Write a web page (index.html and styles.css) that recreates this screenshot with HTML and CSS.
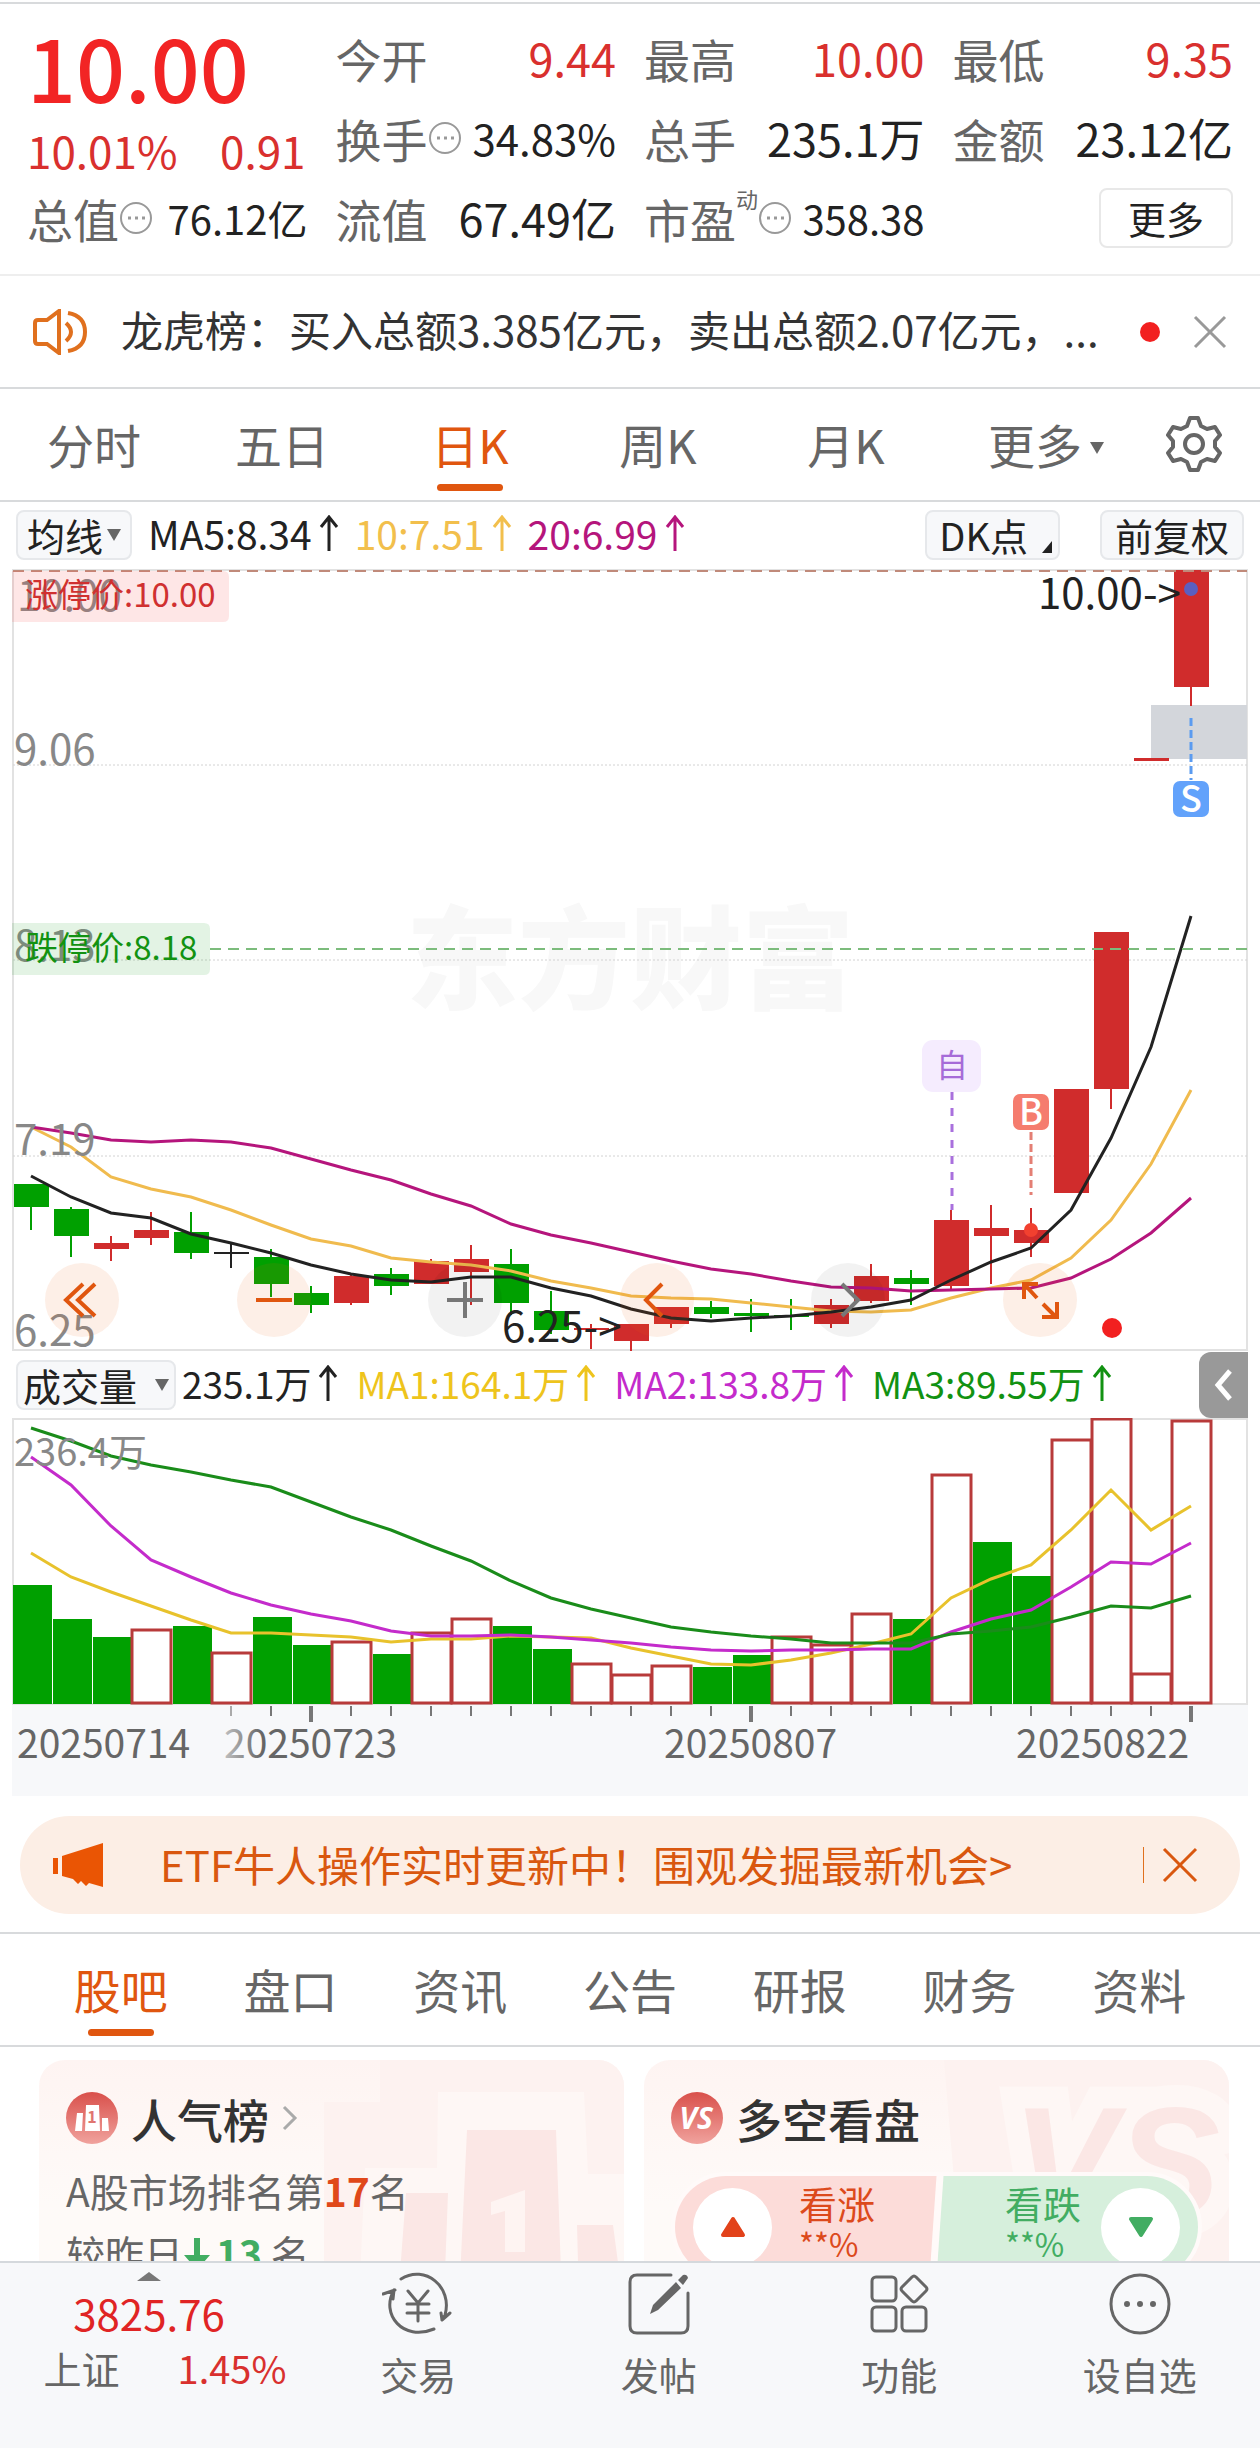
FILE: index.html
```
<!DOCTYPE html>
<html lang="zh-CN">

<head>
    <meta charset="UTF-8">
    <meta name="viewport" content="width=device-width, initial-scale=1">
    <title>日K</title>
    <link rel="stylesheet" href="styles.css">
</head>

<body>
    <main class="content">
        <section class="quote">
            <div class="price">
                <div class="price-now">10.00</div>
                <div class="price-change"><span>10.01%</span><span>0.91</span></div>
            </div>
            <div class="cell"><span class="label">今开</span><span class="value red">9.44</span></div>
            <div class="cell"><span class="label">最高</span><span class="value red">10.00</span></div>
            <div class="cell"><span class="label">最低</span><span class="value red">9.35</span></div>
            <div class="cell"><span class="label">换手</span><svg class="tip" viewBox="0 0 34 34"><circle cx="17" cy="17" r="15"/><path d="M9 17h3M16 17h3M23 17h3"/></svg><span class="value medium">34.83%</span></div>
            <div class="cell"><span class="label">总手</span><span class="value">235.1万</span></div>
            <div class="cell"><span class="label">金额</span><span class="value">23.12亿</span></div>
            <div class="cell"><span class="label">总值</span><svg class="tip" viewBox="0 0 34 34"><circle cx="17" cy="17" r="15"/><path d="M9 17h3M16 17h3M23 17h3"/></svg><span class="value small">76.12亿</span></div>
            <div class="cell"><span class="label">流值</span><span class="value">67.49亿</span></div>
            <div class="cell"><span class="label">市盈<sup>动</sup></span><svg class="tip after-sup" viewBox="0 0 34 34"><circle cx="17" cy="17" r="15"/><path d="M9 17h3M16 17h3M23 17h3"/></svg><span class="value small">358.38</span></div>
            <div class="cell"><button class="more-btn">更多</button></div>
        </section>

        <section class="news">
            <svg class="speaker" viewBox="0 0 56 46" width="56" height="46"><path d="M3 14q0-3 3-3h9L27 2v42L15 35H6q-3 0-3-3z"/><path d="M34 14q10 9 0 18M36 4q17 3 17 19T36 42"/></svg>
            <a class="news-text" href="#">龙虎榜：买入总额3.385亿元，卖出总额2.07亿元，...</a>
            <span class="dot"></span>
            <button class="close" aria-label="关闭"><svg viewBox="0 0 36 36" width="36" height="36"><path d="M3 3l30 30M33 3L3 33"/></svg></button>
        </section>

        <nav class="tabs period">
            <button>分时</button>
            <button>五日</button>
            <button class="active">日K</button>
            <button>周K</button>
            <button>月K</button>
            <button class="more-tab">更多<i class="caret"></i></button>
            <button class="gear" aria-label="设置"><svg viewBox="0 0 56 58" width="56" height="58"><path d="M24 3h8l3 8 6 3 8-2 5 8-5 6v6l5 6-5 8-8-2-6 3-3 8h-8l-3-8-6-3-8 2-5-8 5-6v-6l-5-6 5-8 8 2 6-3z"/><circle cx="28" cy="29" r="9"/></svg></button>
        </nav>

        <section class="chart">
            <svg width="0" height="0"><symbol id="rise" viewBox="0 0 20 36"><path d="M10 36V3M2 12l8-10 8 10"/></symbol></svg>
            <div class="legend">
                <button class="chip">均线<i class="caret"></i></button>
                <span class="ma">MA5:8.34<svg class="rise"><use href="#rise"/></svg></span>
                <span class="ma ma10">10:7.51<svg class="rise"><use href="#rise"/></svg></span>
                <span class="ma ma20">20:6.99<svg class="rise"><use href="#rise"/></svg></span>
                <button class="chip dk">DK点<i class="corner"></i></button>
                <button class="chip">前复权</button>
            </div>

            <div class="price-chart">
                <svg viewBox="12 568 1236 784">
                    <text class="watermark" x="406" y="1001">东方财富</text>
                    <path class="frame" d="M13 570H1247V1350H13z"/>
                    <path class="grid" d="M13 765H1247M13 960H1247M13 1156H1247"/>
                    <rect class="gap" x="1151" y="705" width="96" height="54"/>
                    <g id="candles"></g>
                    <g id="priceLines"></g>
                    <path class="limit-up" d="M13 571H1247"/>
                    <path class="limit-down" d="M210 949H1247"/>
                    <g class="axis-text">
                        <text x="17" y="611">10.00</text>
                        <text x="14" y="765">9.06</text>
                        <text x="14" y="961">8.13</text>
                        <text x="14" y="1155">7.19</text>
                        <text x="14" y="1346">6.25</text>
                    </g>
                    <path class="tag-up" d="M12 571h211q6 0 6 6v39q0 6-6 6H12z"/>
                    <text class="tag-up-text" x="25" y="607">涨停价:10.00</text>
                    <path class="tag-down" d="M12 923h192q6 0 6 6v40q0 6-6 6H12z"/>
                    <text class="tag-down-text" x="25" y="960">跌停价:8.18</text>
                    <circle cx="1191" cy="589" r="7" fill="#5b5fc0"/>
                    <text class="mark" x="1038" y="609">10.00-&gt;</text>
                    <text class="mark" x="502" y="1342">6.25-&gt;</text>

                    <path class="s-line" d="M1191 718V780"/>
                    <rect x="1173" y="781" width="36" height="36" rx="7" fill="#62a2fb"/>
                    <text class="badge" x="1191" y="812">S</text>
                    <path class="z-line" d="M952 1092V1210"/>
                    <rect x="922" y="1040" width="59" height="52" rx="11" fill="#f5ecfe"/>
                    <text class="z-text" x="952" y="1077">自</text>
                    <path class="b-line" d="M1031 1132V1195"/>
                    <rect x="1013" y="1094" width="36" height="36" rx="7" fill="#f57c6e"/>
                    <text class="badge" x="1031" y="1125">B</text>
                    <circle cx="1031" cy="1230" r="7" fill="#f2402f"/>
                    <circle cx="1112" cy="1328" r="10" fill="#f22020"/>
                </svg>
                <div class="tools">
                    <button aria-label="最左"><svg viewBox="0 0 74 74"><path d="M38 21L21 37l17 16M50 21L33 37l17 16"/></svg></button>
                    <button aria-label="缩小"><svg viewBox="0 0 74 74"><path d="M19 37h36"/></svg></button>
                    <button class="off" aria-label="放大"><svg viewBox="0 0 74 74"><path d="M19 37h36M37 19v36"/></svg></button>
                    <button aria-label="左移"><svg viewBox="0 0 74 74"><path d="M42 21L26 37l16 16"/></svg></button>
                    <button class="off" aria-label="右移"><svg viewBox="0 0 74 74"><path d="M31 21l16 16-16 16"/></svg></button>
                    <button aria-label="全屏"><svg viewBox="0 0 74 74"><path d="M21 36V21h14M22 22l12 13M40 41l13 13M54 39v15H39"/></svg></button>
                </div>
            </div>

            <div class="legend volume">
                <button class="chip">成交量<i class="caret"></i></button>
                <span class="ma">235.1万<svg class="rise"><use href="#rise"/></svg></span>
                <span class="ma v1">MA1:164.1万<svg class="rise"><use href="#rise"/></svg></span>
                <span class="ma v2">MA2:133.8万<svg class="rise"><use href="#rise"/></svg></span>
                <span class="ma v3">MA3:89.55万<svg class="rise"><use href="#rise"/></svg></span>
                <button class="side" aria-label="展开"><svg viewBox="0 0 20 34" width="20" height="34"><path d="M16 3L4 17l12 14"/></svg></button>
            </div>

            <svg viewBox="12 1418 1236 287">
                <path class="frame" d="M13 1419H1247V1704H13z"/>
                <g id="bars"></g>
                <g id="volumeLines"></g>
                <text class="axis-text vol-max" x="14" y="1466">236.4万</text>
            </svg>
            <svg class="dates" viewBox="12 1705 1236 91">
                <defs>
                    <linearGradient id="fade" x1="226" x2="262" y1="0" y2="0" gradientUnits="userSpaceOnUse">
                        <stop offset="0" stop-color="#bbb"/><stop offset="1" stop-color="#666"/>
                    </linearGradient>
                </defs>
                <g id="ticks"></g>
                <text x="17" y="1758">20250714</text>
                <text class="faded" x="224" y="1758">20250723</text>
                <text x="664" y="1758">20250807</text>
                <text x="1016" y="1758">20250822</text>
            </svg>
        </section>

        <section class="banner">
            <svg viewBox="0 0 50 44" width="50" height="44"><path d="M0 15h5v16H0zM9 13L50 0v44l-14-4-3 3-5-5-3 3-5-5-11-3z"/></svg>
            <a href="#">ETF牛人操作实时更新中！围观发掘最新机会&gt;</a>
            <button class="close" aria-label="关闭"><svg viewBox="0 0 36 36" width="36" height="36"><path d="M2 2l32 32M34 2L2 34"/></svg></button>
        </section>

        <nav class="tabs sections">
            <button class="active">股吧</button>
            <button>盘口</button>
            <button>资讯</button>
            <button>公告</button>
            <button>研报</button>
            <button>财务</button>
            <button>资料</button>
        </nav>

        <section class="cards">
            <article class="card">
                <svg class="art" viewBox="0 0 585 240" width="585" height="240">
                    <path fill="#fdf2f0" d="M341 0h244v240H285V42h56z"/>
                    <path fill="#fef7f5" d="M399 32h146l4 82h36v126H320l6-132h72z"/>
                    <path fill="#fbe7e5" d="M428 70h89l6 170H420zM367 133h42l-4 107h-46zM538 165h36l10 75h-44z"/>
                    <path fill="#fef4f2" d="M452 142l34-12v62h-20v-41l-14 4z"/>
                </svg>
                <h3>
                    <svg viewBox="0 0 52 52" width="52" height="52"><circle cx="26" cy="26" r="26" fill="url(#red)"/><path fill="#fff" d="M20 13h13l1 26H19zM11 21h6l-1 18H9zM36 26h6l1 13h-7z"/><text class="podium" x="26" y="31">1</text></svg>
                    人气榜
                    <svg class="arrow" viewBox="0 0 16 26" width="16" height="26"><path d="M2 2l11 11L2 24"/></svg>
                </h3>
                <p>A股市场排名第<b class="rank">17</b>名</p>
                <p>较昨日<svg class="down" viewBox="0 0 26 32" width="26" height="32"><path d="M10 0h6v17h10L13 32 0 17h10z"/></svg><b class="green">13</b> 名</p>
            </article>
            <article class="card vs">
                <svg class="art" viewBox="0 0 585 240" width="585" height="240">
                    <path fill="#fdf2f0" d="M300 0h285v240H320z"/>
                    <text class="vs-halo" x="368" y="156">VS</text>
                    <text class="vs-big" x="368" y="156">VS</text>
                </svg>
                <h3>
                    <svg viewBox="0 0 52 52" width="52" height="52">
                        <defs><linearGradient id="red" x2="0" y2="1"><stop offset="0" stop-color="#d9504b"/><stop offset="1" stop-color="#f0a29d"/></linearGradient></defs>
                        <circle cx="26" cy="26" r="26" fill="url(#red)"/><text class="vs-icon" x="25" y="37">VS</text>
                    </svg>
                    多空看盘
                </h3>
                <div class="vote">
                    <button class="up">
                        <span class="knob"><svg viewBox="0 0 26 22" width="26" height="22"><path d="M13 3L23 19H3z"/></svg></span>
                        <span class="vote-text">看涨<small>**%</small></span>
                    </button>
                    <button class="fall">
                        <span class="vote-text">看跌<small>**%</small></span>
                        <span class="knob"><svg viewBox="0 0 26 22" width="26" height="22"><path d="M13 19L23 3H3z"/></svg></span>
                    </button>
                </div>
            </article>
        </section>
    </main>

    <nav class="bottom">
        <a class="index" href="#">
            <i class="fold"></i>
            <span class="points">3825.76</span>
            <span class="index-row"><span>上证</span><span class="red">1.45%</span></span>
        </a>
        <a href="#">
            <svg viewBox="0 0 72 64" width="72" height="64"><path d="M19 7C43-8 71 15 63 43l-3 5M60 48l8-7M60 48l-1-7M12 18C-2 42 21 70 52 57M1 22l12-4M12 18l-1 9M26 19l10 12 10-12M36 31v18M25 32h22M25 41h22"/></svg>
            交易
        </a>
        <a href="#">
            <svg viewBox="0 0 72 64" width="72" height="64"><path d="M48 3H14q-7 0-7 7v44q0 7 7 7h44q7 0 7-7V21"/><path class="fill" d="M27 42l3-9 23-23 5 6-23 22zM55 8l5-5q4-1 5 3l-5 7z"/></svg>
            发帖
        </a>
        <a href="#">
            <svg viewBox="0 0 72 64" width="72" height="64"><rect x="9" y="5" width="24" height="24" rx="4"/><rect x="9" y="35" width="24" height="24" rx="4"/><rect x="39" y="35" width="24" height="24" rx="4"/><path d="M49 5q2-2 4 0l10 10q2 2 0 4L53 29q-2 2-4 0L39 19q-2-2 0-4z"/></svg>
            功能
        </a>
        <a href="#">
            <svg viewBox="0 0 72 64" width="72" height="64"><circle cx="36" cy="32" r="29"/><path class="fill" d="M20 32a3 3 0 1 1 6 0 3 3 0 1 1-6 0M33 32a3 3 0 1 1 6 0 3 3 0 1 1-6 0M46 32a3 3 0 1 1 6 0 3 3 0 1 1-6 0"/></svg>
            设自选
        </a>
    </nav>

    <script src="chart.js"></script>
</body>

</html>
```
FILE: styles.css
```
* {
    box-sizing: border-box;
}

body {
    margin: 0;
    height: 100vh;
    display: flex;
    flex-direction: column;
    background: #fff;
    color: #222;
    font-family: "Noto Sans CJK SC", sans-serif;
}

button {
    padding: 0;
    border: none;
    background: none;
    color: inherit;
    font: inherit;
    cursor: pointer;
}

a {
    color: inherit;
    text-decoration: none;
}

svg {
    display: block;
    fill: none;
}

.content {
    flex: 1;
    min-height: 0;
    overflow: hidden;
}

.red {
    color: #d9302e;
}

.green {
    color: #42ad62;
}

.caret {
    display: inline-block;
    border: 7px solid transparent;
    border-top: 12px solid #666;
    border-bottom: none;
}

/* quote */
.quote {
    display: grid;
    grid-template-columns: repeat(4, 1fr);
    grid-auto-rows: 80px;
    column-gap: 28px;
    margin-top: 2px;
    padding: 15px 27px;
    border-top: 2px solid #d8dadc;
    border-bottom: 2px solid #eee;
}

.price {
    grid-row: span 2;
    color: #f22424;
}

.price-now {
    font-size: 86px;
    font-weight: 500;
    line-height: 94px;
}

.price-change {
    display: flex;
    justify-content: space-between;
    padding-right: 2px;
    color: #d9302e;
    font-size: 44px;
    line-height: 74px;
}

.cell {
    display: flex;
    align-items: center;
    line-height: 76px;
    padding-bottom: 2px;
}

.label {
    position: relative;
    color: #666;
    font-size: 46px;
}

.label sup {
    position: absolute;
    left: 100%;
    top: 0;
    font-size: 22px;
    line-height: 36px;
}

.value {
    margin-left: auto;
    font-size: 45px;
}

.value.medium {
    font-size: 42px;
}

.value.small {
    font-size: 40px;
}

.tip {
    width: 34px;
    stroke: #999;
    stroke-width: 2;
}

.tip path {
    stroke-width: 3;
}

.tip.after-sup {
    margin-left: 22px;
}

.more-btn {
    width: 134px;
    height: 60px;
    margin-left: auto;
    border: 2px solid #e8e8e8;
    border-radius: 8px;
    font-size: 38px;
    line-height: 50px;
}

/* news */
.news {
    display: flex;
    align-items: center;
    padding: 0 32px;
    border-bottom: 2px solid #d8dadc;
    color: #333;
    font-size: 42px;
    line-height: 111px;
}

.speaker {
    margin-right: 33px;
    stroke: #e0701e;
    stroke-width: 4;
}

.news-text {
    flex: 1;
    padding-bottom: 6px;
    line-height: 105px;
    white-space: nowrap;
}

.dot {
    width: 20px;
    height: 20px;
    margin-right: 32px;
    border-radius: 50%;
    background: #f22020;
}

.close svg {
    stroke: #999;
    stroke-width: 3;
}

/* tabs */
.tabs {
    display: flex;
    border-bottom: 2px solid #d8dadc;
}

.tabs button {
    position: relative;
    flex: 1;
    padding-bottom: 2px;
    color: #666;
    font-size: 47px;
    line-height: 109px;
}

.tabs .active {
    color: #e0560f;
}

.tabs .active::after {
    content: "";
    position: absolute;
    left: 50%;
    bottom: 9px;
    width: 66px;
    height: 7px;
    margin-left: -33px;
    border-radius: 4px;
    background: #e0560f;
}

.tabs .more-tab {
    text-indent: 24px;
}

.tabs .caret {
    margin: 0 0 10px 8px;
}

.period .gear {
    flex: 0 0 132px;
    display: flex;
    align-items: center;
    justify-content: center;
}

.gear svg {
    stroke: #666;
    stroke-width: 4;
    stroke-linejoin: round;
}

.sections {
    padding: 0 36px;
    border-top: 2px solid #d8dadc;
}

/* chart */
.chart {
    padding: 0 12px;
}

.legend {
    display: flex;
    align-items: center;
    gap: 16px;
    height: 66px;
    padding: 0 4px;
    font-size: 38px;
    white-space: nowrap;
}

.chip {
    display: flex;
    align-items: center;
    gap: 4px;
    height: 50px;
    padding: 0 9px;
    border: 2px solid #e6e8eb;
    border-radius: 8px;
    background: #f7f8fa;
    line-height: 42px;
}

.chip:last-child {
    padding: 0 13px;
}

.chip.dk {
    margin-left: auto;
    margin-right: 24px;
    padding: 0 6px 0 12px;
    gap: 14px;
}

.corner {
    align-self: flex-end;
    margin-bottom: 5px;
    border-left: 10px solid transparent;
    border-bottom: 12px solid #222;
}

.ma {
    display: flex;
    align-items: center;
    gap: 7px;
    padding-bottom: 4px;
    font-size: 39px;
    line-height: 46px;
}

.rise {
    width: 20px;
    height: 36px;
    stroke: currentColor;
    stroke-width: 3;
}

.ma10 {
    color: #f2bf4c;
}

.ma20 {
    color: #b5157c;
}

.legend.volume {
    gap: 18px;
    padding-right: 0;
}

.volume .chip {
    gap: 18px;
    margin-right: -12px;
    padding: 0 5px;
}

.volume .ma {
    font-size: 37px;
}

.v1 {
    color: #eec41c;
}

.v2 {
    color: #c42bcb;
}

.v3 {
    color: #129212;
}

.side {
    display: flex;
    align-items: center;
    justify-content: center;
    width: 49px;
    height: 66px;
    margin-left: auto;
    border-radius: 12px 0 0 12px;
    background: #999;
}

.side svg {
    stroke: #fff;
    stroke-width: 5;
}

.price-chart {
    position: relative;
}

.tools {
    position: absolute;
    left: 33px;
    right: 171px;
    bottom: 15px;
    display: flex;
    justify-content: space-between;
}

.tools button {
    width: 74px;
    height: 74px;
    border-radius: 50%;
    background: rgba(240, 100, 20, 0.1);
}

.tools svg {
    stroke: #e0560f;
    stroke-width: 4;
}

.tools .off {
    background: rgba(0, 0, 0, 0.05);
}

.tools .off svg {
    stroke: #777;
}

.frame {
    stroke: #e2e2e2;
    stroke-width: 2;
}

.grid {
    stroke: #d2d2d2;
    stroke-dasharray: 2 2;
}

.gap {
    fill: #d3d6db;
}

.limit-up {
    stroke: #c08a7a;
    stroke-width: 2;
    stroke-dasharray: 11 7;
}

.limit-down {
    stroke: #7cbc7c;
    stroke-width: 2;
    stroke-dasharray: 11 7;
}

.watermark {
    fill: #f8f8f8;
    font-size: 112px;
    font-weight: 900;
}

.axis-text {
    fill: #888;
    font-size: 42px;
}

.vol-max {
    font-size: 38px;
}

.tag-up {
    fill: rgba(248, 90, 85, 0.15);
}

.tag-down {
    fill: rgba(40, 165, 50, 0.13);
}

.tag-up-text,
.tag-down-text {
    fill: #d03030;
    font-size: 33px;
}

.tag-down-text {
    fill: #129212;
}

.mark {
    fill: #222;
    font-size: 42px;
}

.badge {
    fill: #fff;
    font-size: 36px;
    font-weight: 500;
    text-anchor: middle;
}

.z-text {
    fill: #a66bd8;
    font-size: 32px;
    text-anchor: middle;
}

.s-line,
.b-line,
.z-line {
    stroke: #5b9bf0;
    stroke-width: 3;
    stroke-dasharray: 8 4;
}

.b-line {
    stroke: #e47f74;
}

.z-line {
    stroke: #a970dd;
    stroke-dasharray: 8 8;
}

.dates {
    background: #f7f8fa;
}

.dates text {
    fill: #666;
    font-size: 39px;
}

.dates .faded {
    fill: url(#fade);
}

/* banner */
.banner {
    display: flex;
    align-items: center;
    height: 98px;
    margin: 20px 20px 18px;
    padding: 0 42px 0 33px;
    border-radius: 49px;
    background: #fceee5;
    color: #d9570f;
    font-size: 42px;
}

.banner svg {
    fill: #ea5504;
}

.banner a {
    flex: 1;
    margin-left: 57px;
    padding-bottom: 4px;
    white-space: nowrap;
}

.banner .close {
    padding-left: 18px;
    border-left: 1px solid #e0701e;
}

.banner .close svg {
    stroke: #d9570f;
}

/* cards */
.cards {
    display: grid;
    grid-template-columns: 1fr 1fr;
    gap: 20px;
    padding: 13px 31px 0 39px;
}

.card {
    position: relative;
    height: 240px;
    padding: 28px 27px;
    border-radius: 26px;
    overflow: hidden;
    background: linear-gradient(#fef4f2, #fefaf8 60%);
    color: #666;
    font-size: 39px;
}

.art {
    position: absolute;
    top: 0;
    right: 0;
}

.card h3,
.card p {
    position: relative;
    margin: 0;
}

.card h3 {
    display: flex;
    align-items: center;
    gap: 13px;
    color: #333;
    font-size: 46px;
    font-weight: 500;
    line-height: 60px;
}

.card p {
    display: flex;
    line-height: 62px;
    white-space: pre;
}

.card h3 + p {
    margin-top: 11px;
}

.card p b {
    font-weight: 700;
}

.arrow {
    stroke: #aaa;
    stroke-width: 3;
}

.down {
    align-self: center;
    margin: 4px 6px 0 1px;
    fill: #42ad62;
}

.rank {
    color: #e0481a;
}

.podium {
    fill: #e07570;
    font-size: 16px;
    font-weight: 700;
    text-anchor: middle;
}

.vs-icon,
.vs-big,
.vs-halo {
    fill: #fff;
    font-family: "Liberation Sans", sans-serif;
    font-size: 30px;
    font-style: italic;
    font-weight: 700;
    text-anchor: middle;
}

.vs-icon {
    font-family: "Open Sans", sans-serif;
}

.vs-big,
.vs-halo {
    fill: #fbe7e5;
    font-size: 156px;
    text-anchor: start;
}

.vs-halo {
    stroke: #fef7f5;
    stroke-width: 44;
}

.vote {
    position: relative;
    display: flex;
    gap: 7px;
    margin: 24px 0 0;
    border: 4px solid #fffaf9;
    border-radius: 56px;
    overflow: hidden;
    background: #fffaf9;
}

.vote button {
    flex: 1;
    display: flex;
    align-items: center;
    height: 102px;
    padding: 0 18px;
    text-align: left;
}

.vote .up {
    background: #fcdcd9;
    color: #dc4a1c;
    clip-path: polygon(0 0, 100% 0, calc(100% - 7px) 100%, 0 100%);
}

.vote .fall {
    justify-content: flex-end;
    margin-left: -7px;
    background: #d6efdc;
    color: #42ad62;
    clip-path: polygon(7px 0, 100% 0, 100% 100%, 0 100%);
}

.knob {
    display: flex;
    align-items: center;
    justify-content: center;
    width: 79px;
    height: 79px;
    border-radius: 50%;
    background: #fff;
}

.knob svg {
    fill: #e2421a;
    stroke: #e2421a;
    stroke-width: 4;
    stroke-linejoin: round;
}

.fall .knob svg {
    fill: #42ad62;
    stroke: #42ad62;
}

.vote-text {
    display: flex;
    flex-direction: column;
    margin: 0 20px 0 27px;
    padding-bottom: 10px;
    font-size: 38px;
    line-height: 42px;
}

.vote-text small {
    font-size: 32px;
    line-height: 38px;
}

/* bottom bar */
.bottom {
    display: grid;
    grid-template-columns: 298px repeat(4, 1fr);
    height: 187px;
    border-top: 2px solid #d5d9dd;
    background: #f7f8fa;
    color: #666;
    font-size: 38px;
    line-height: 52px;
}

.bottom a {
    display: flex;
    flex-direction: column;
    align-items: center;
    gap: 12px;
    padding-top: 9px;
}

.bottom svg {
    stroke: #666;
    stroke-width: 3;
    stroke-linecap: round;
}

.bottom .fill {
    fill: #666;
    stroke: none;
}

.bottom .index {
    gap: 0;
}

.fold {
    border: 12px solid transparent;
    border-top: none;
    border-bottom: 9px solid #777;
}

.points {
    color: #e02424;
    font-size: 42px;
    line-height: 64px;
}

.index-row {
    display: flex;
    gap: 58px;
    padding-left: 32px;
    line-height: 46px;
}
```
FILE: chart.js
```
const STEP = 40
const FIRST = 31

// type, high, body top, body bottom, low
const candles = [
    ['g', 1184, 1184, 1207, 1230], ['g', 1207, 1209, 1236, 1257], ['r', 1236, 1243, 1249, 1261],
    ['r', 1212, 1230, 1238, 1245], ['g', 1212, 1232, 1253, 1259], ['k', 1243, 1252, 1254, 1268],
    ['g', 1249, 1257, 1284, 1297], ['g', 1286, 1293, 1305, 1313], ['r', 1275, 1276, 1303, 1305],
    ['g', 1268, 1274, 1286, 1295], ['r', 1259, 1261, 1284, 1284], ['r', 1245, 1259, 1272, 1305],
    ['g', 1249, 1264, 1303, 1315], ['g', 1291, 1311, 1330, 1334], ['r', 1324, 1328, 1330, 1349],
    ['r', 1324, 1324, 1341, 1351], ['r', 1307, 1307, 1324, 1328], ['g', 1301, 1307, 1314, 1318],
    ['g', 1299, 1313, 1316, 1332], ['g', 1299, 1315, 1317, 1330], ['r', 1299, 1305, 1324, 1328],
    ['r', 1264, 1276, 1301, 1303], ['g', 1270, 1278, 1284, 1305], ['r', 1210, 1220, 1286, 1289],
    ['r', 1205, 1228, 1236, 1284], ['r', 1208, 1230, 1243, 1257], ['r', 1089, 1089, 1193, 1193],
    ['r', 932, 932, 1089, 1109], ['r', 758, 758, 761, 761], ['r', 570, 570, 687, 706]
]

const priceLines = {
    '#f0bb4e': [1127, 1147, 1177, 1189, 1197, 1210, 1225, 1239, 1246, 1258, 1262, 1265, 1271, 1281, 1288, 1296, 1298, 1299, 1303, 1307, 1311, 1312, 1310, 1298, 1288, 1280, 1258, 1220, 1164, 1090],
    '#b5157c': [1127, 1133, 1140, 1142, 1140, 1142, 1148, 1159, 1170, 1180, 1194, 1206, 1224, 1235, 1243, 1252, 1261, 1269, 1274, 1281, 1287, 1288, 1291, 1290, 1289, 1288, 1278, 1259, 1233, 1198],
    '#222222': [1176, 1197, 1213, 1218, 1234, 1243, 1253, 1265, 1274, 1280, 1282, 1277, 1277, 1288, 1296, 1309, 1318, 1321, 1318, 1316, 1312, 1307, 1300, 1280, 1262, 1248, 1210, 1138, 1047, 916]
}

const bars = [
    ['g', 1585], ['g', 1619], ['g', 1637], ['r', 1630], ['g', 1626], ['r', 1653], ['g', 1617], ['g', 1645],
    ['r', 1642], ['g', 1654], ['r', 1633], ['r', 1619], ['g', 1626], ['g', 1649], ['r', 1664], ['r', 1675],
    ['r', 1666], ['g', 1667], ['g', 1655], ['r', 1637], ['r', 1645], ['r', 1614], ['g', 1619], ['r', 1475],
    ['g', 1542], ['g', 1576], ['r', 1440], ['r', 1419], ['r', 1674], ['r', 1421]
]

const volumeLines = {
    '#e8c22c': [1553, 1577, 1592, 1606, 1620, 1633, 1633, 1635, 1637, 1642, 1639, 1639, 1636, 1637, 1638, 1648, 1656, 1664, 1665, 1660, 1653, 1644, 1634, 1598, 1579, 1565, 1530, 1490, 1530, 1506],
    '#c42bcb': [1457, 1485, 1526, 1560, 1577, 1593, 1605, 1614, 1621, 1631, 1636, 1636, 1635, 1637, 1640, 1643, 1647, 1650, 1651, 1650, 1650, 1649, 1649, 1632, 1619, 1610, 1587, 1562, 1564, 1543],
    '#1a8c1a': [1428, 1441, 1456, 1465, 1472, 1480, 1487, 1502, 1517, 1530, 1546, 1561, 1581, 1598, 1609, 1618, 1627, 1632, 1636, 1639, 1643, 1643, 1643, 1634, 1631, 1627, 1617, 1606, 1608, 1596]
}

const colors = { r: '#d02c2c', g: '#00a000', k: '#222222' }
const x = i => FIRST + STEP * i

function drawLines(id, lines) {
    document.getElementById(id).innerHTML = Object.keys(lines).map(color =>
        `<polyline points="${lines[color].map((y, i) => x(i) + ',' + y).join(' ')}" stroke="${color}" stroke-width="3"/>`
    ).join('')
}

document.getElementById('candles').innerHTML = candles.map(([type, high, top, bottom, low], i) =>
    `<path d="M${x(i)} ${high}V${low}" stroke="${colors[type]}" stroke-width="2"/>
    <rect x="${x(i) - 17}" y="${top}" width="35" height="${bottom - top}" fill="${colors[type]}"/>`
).join('')

document.getElementById('bars').innerHTML = bars.map(([type, top], i) =>
    type === 'g'
        ? `<rect x="${x(i) - 18}" y="${top}" width="39" height="${1704 - top}" fill="${colors.g}"/>`
        : `<rect x="${x(i) - 19}" y="${top}" width="39" height="${1703 - top}" stroke="#b83a3a" stroke-width="3"/>`
).join('')

// one tick per day, a long one above each date
let ticks = ''
for (let i = 5; i < 30; i++) {
    const long = i === 7 || i === 18 || i === 29
    ticks += `<path d="M${x(i)} 1706v${long ? 16 : 10}" stroke="${i === 5 ? '#aaa' : '#777'}" stroke-width="${long ? 4 : 2}"/>`
}
document.getElementById('ticks').innerHTML = ticks

drawLines('priceLines', priceLines)
drawLines('volumeLines', volumeLines)
```
